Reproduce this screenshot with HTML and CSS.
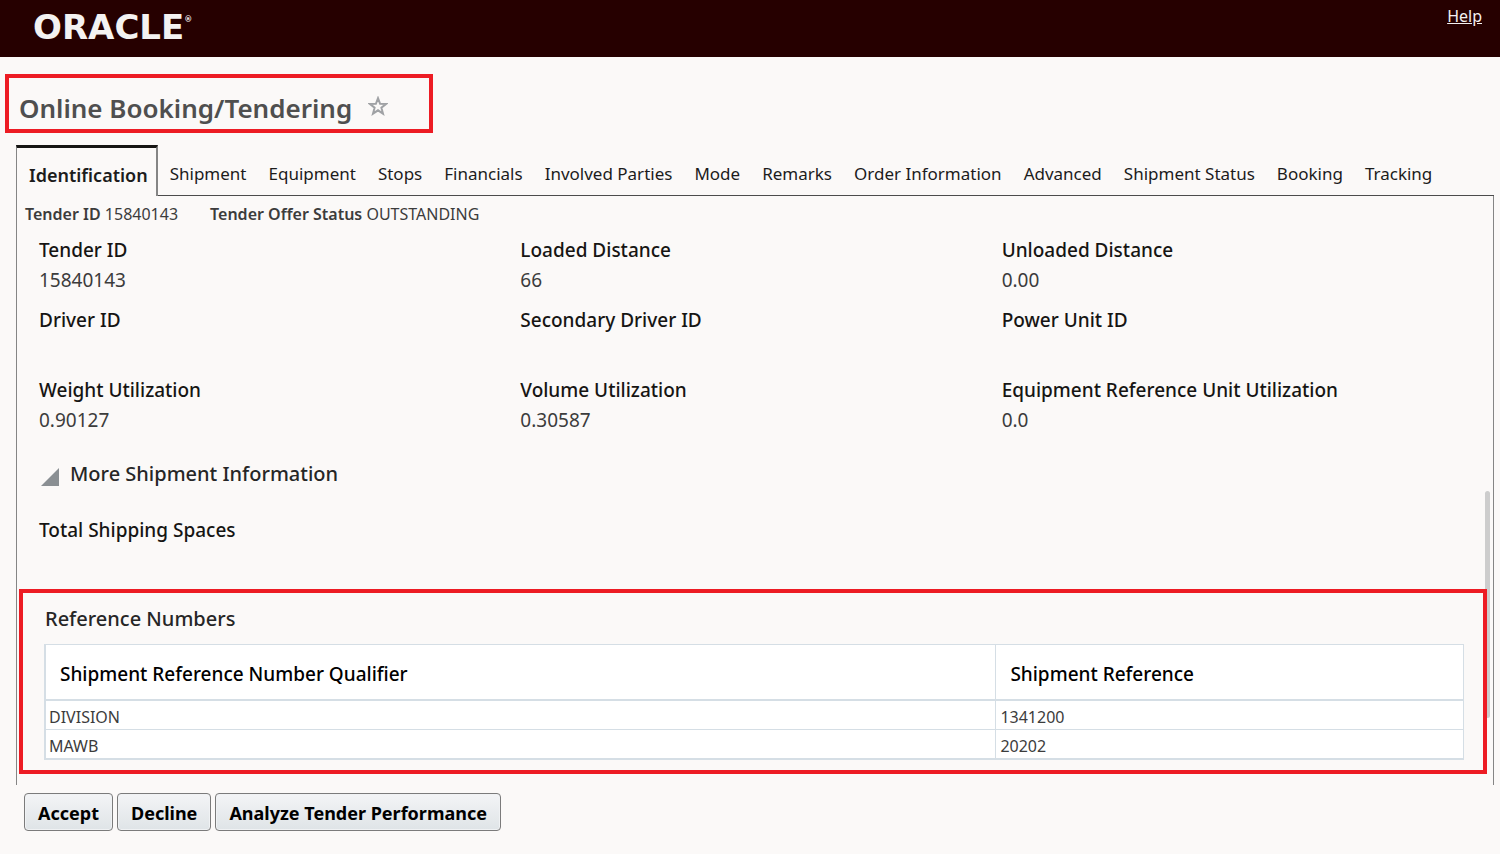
FILE: index.html
```html
<!DOCTYPE html>
<html lang="en">
<head>
<meta charset="utf-8">
<meta name="viewport" content="width=device-width, initial-scale=1">
<title>Online Booking/Tendering</title>
<link rel="stylesheet" href="styles.css">
</head>
<body>
<header class="topbar">
  <div class="logo">ORACLE<sup class="logo-mark">®</sup></div>
  <a class="help" href="#help">Help</a>
</header>
<main class="page">
  <div class="title-box">
    <h1 class="title">Online Booking/Tendering</h1>
    <button class="star" type="button" aria-label="Add to favorites">
      <svg width="20" height="20" viewBox="0 0 20 20" fill="none" stroke="#a0a2a5" stroke-width="2" stroke-linejoin="miter"><path d="M10 2.2 12.1 7.8 18 8 13.4 11.7 15 17.6 10 14.3 5 17.6 6.6 11.7 2 8 7.9 7.8Z"/></svg>
    </button>
  </div>
  <nav class="tabs">
    <a class="tab tab-active" href="#identification">Identification</a>
    <a class="tab" href="#shipment">Shipment</a>
    <a class="tab" href="#equipment">Equipment</a>
    <a class="tab" href="#stops">Stops</a>
    <a class="tab" href="#financials">Financials</a>
    <a class="tab" href="#parties">Involved Parties</a>
    <a class="tab" href="#mode">Mode</a>
    <a class="tab" href="#remarks">Remarks</a>
    <a class="tab" href="#order">Order Information</a>
    <a class="tab" href="#advanced">Advanced</a>
    <a class="tab" href="#status">Shipment Status</a>
    <a class="tab" href="#booking">Booking</a>
    <a class="tab" href="#tracking">Tracking</a>
  </nav>
  <section class="panel">
    <div class="summary">
      <span><b>Tender ID</b> 15840143</span>
      <span><b>Tender Offer Status</b> OUTSTANDING</span>
    </div>
    <div class="scroll-thumb"></div>
    <dl class="fields">
      <div class="field"><dt>Tender ID</dt><dd>15840143</dd></div>
      <div class="field"><dt>Loaded Distance</dt><dd>66</dd></div>
      <div class="field"><dt>Unloaded Distance</dt><dd>0.00</dd></div>
      <div class="field"><dt>Driver ID</dt><dd></dd></div>
      <div class="field"><dt>Secondary Driver ID</dt><dd></dd></div>
      <div class="field"><dt>Power Unit ID</dt><dd></dd></div>
      <div class="field"><dt>Weight Utilization</dt><dd>0.90127</dd></div>
      <div class="field"><dt>Volume Utilization</dt><dd>0.30587</dd></div>
      <div class="field"><dt>Equipment Reference Unit Utilization</dt><dd>0.0</dd></div>
    </dl>
    <h2 class="section-title more-title">
      <svg width="18" height="18" viewBox="0 0 18 18"><path d="M18 0V18H0Z" fill="#8a8f93"/></svg>
      More Shipment Information
    </h2>
    <dl class="fields spaces">
      <div class="field"><dt>Total Shipping Spaces</dt><dd></dd></div>
    </dl>
    <div class="refs">
      <h2 class="section-title">Reference Numbers</h2>
      <table class="ref-table">
        <thead>
          <tr><th class="col-qualifier" scope="col">Shipment Reference Number Qualifier</th><th scope="col">Shipment Reference</th></tr>
        </thead>
        <tbody>
          <tr><td>DIVISION</td><td>1341200</td></tr>
          <tr><td>MAWB</td><td>20202</td></tr>
        </tbody>
      </table>
    </div>
  </section>
  <div class="actions">
    <button class="btn" type="button">Accept</button>
    <button class="btn" type="button">Decline</button>
    <button class="btn" type="button">Analyze Tender Performance</button>
  </div>
</main>
</body>
</html>
```
FILE: styles.css
```css
* { box-sizing: border-box; }
body {
  margin: 0;
  background: #fbf9f8;
  color: #3c3c3c;
  font: 16px/24px "Noto Sans", "Open Sans", sans-serif;
}
h1, h2, dl, dd { margin: 0; }
.topbar {
  display: flex;
  justify-content: space-between;
  align-items: flex-start;
  min-height: 57px;
  padding: 4px 18px 0 33px;
  background: #260000;
}
.logo {
  color: #f4f2f2;
  font: bold 34px/46px "DejaVu Sans", sans-serif;
}
.logo-mark { font-size: 8px; line-height: 8px; vertical-align: 17px; }
.help { color: #f4f0f0; font-size: 16px; }
.title-box {
  display: flex;
  align-items: center;
  gap: 16px;
  width: 428px;
  height: 59px;
  margin: 17px 0 12px 5px;
  padding: 8px 10px 0;
  border: 4px solid #ed1c24;
}
.title {
  color: #4f4f4f;
  font-size: 26px;
  line-height: 36px;
  font-weight: 600;
  white-space: nowrap;
}
.star {
  display: flex;
  padding: 0 0 4px;
  border: 0;
  background: none;
}
.tabs {
  display: flex;
  align-items: flex-end;
  gap: 22px;
  margin: 0 6px 0 16px;
  border-bottom: 1px solid #4c4c4c;
}
.tab {
  padding-bottom: 9px;
  color: #1c1c1c;
  font-size: 17px;
  line-height: 24px;
  text-decoration: none;
  white-space: nowrap;
}
.tab-active {
  margin: 0 -10px -1px 0;
  padding: 15px 8px 9px 12px;
  border: 1px solid #858585;
  border-width: 3px 2px 0 1px;
  border-top-color: #161513;
  background: #fbf9f8;
  font-size: 18px;
  font-weight: 600;
}
.panel {
  position: relative;
  margin: 0 6px 0 16px;
  padding: 4px 6px 11px 2px;
  border: solid #858585;
  border-width: 0 1px;
}
.summary {
  display: flex;
  gap: 32px;
  padding: 2px 6px 9px;
}
.summary b { font-weight: 600; }
.scroll-thumb {
  position: absolute;
  top: 295px;
  right: 3px;
  width: 5px;
  height: 227px;
  border-radius: 3px;
  background: #cdcdcd;
}
.fields {
  display: grid;
  grid-template-columns: repeat(3, 1fr);
  row-gap: 10px;
  margin: 0 4px 0 20px;
}
.field { font-size: 19px; line-height: 30px; }
.field dt { color: #161513; font-weight: 500; }
.field dd { min-height: 30px; color: #3c3c3c; }
.section-title {
  padding-left: 1px;
  color: #262626;
  font-size: 20px;
  line-height: 30px;
  font-weight: 500;
}
.more-title {
  display: flex;
  align-items: center;
  gap: 11px;
  margin: 24px 0 26px 21px;
}
.more-title svg { margin-top: 6px; }
.refs {
  position: relative;
  margin-top: 14px;
  padding: 11px 19px 10px 21px;
  border: 4px solid #ed1c24;
}
.ref-table {
  width: 100%;
  margin-top: 10px;
  border: solid #d5dee5;
  border-width: 1px 1px 2px 2px;
  border-spacing: 0;
  background: #fff;
}
.ref-table th {
  padding: 15px 14px 11px;
  border-bottom: 2px solid #d5dee5;
  color: #000;
  font-size: 19px;
  line-height: 28px;
  font-weight: 500;
  text-align: left;
}
.ref-table .col-qualifier { width: 67%; }
.ref-table td { padding: 4px 4px 0; }
.ref-table td:first-child { padding-left: 3px; }
.ref-table tr > :last-child { border-left: 1px solid #d5dee5; }
.ref-table tr:last-child td { border-top: 1px solid #d5dee5; }
.actions { display: flex; gap: 4px; padding: 8px 24px 23px; }
.btn {
  height: 38px;
  padding: 2px 13px 0;
  border: 1px solid #7b7b7b;
  border-radius: 4px;
  background: linear-gradient(#f3f4f6, #dfe4e7);
  box-shadow: inset 0 0 0 1px #f0f2f4;
  color: #000;
  font: bold 18px/24px "Noto Sans", sans-serif;
}
```
